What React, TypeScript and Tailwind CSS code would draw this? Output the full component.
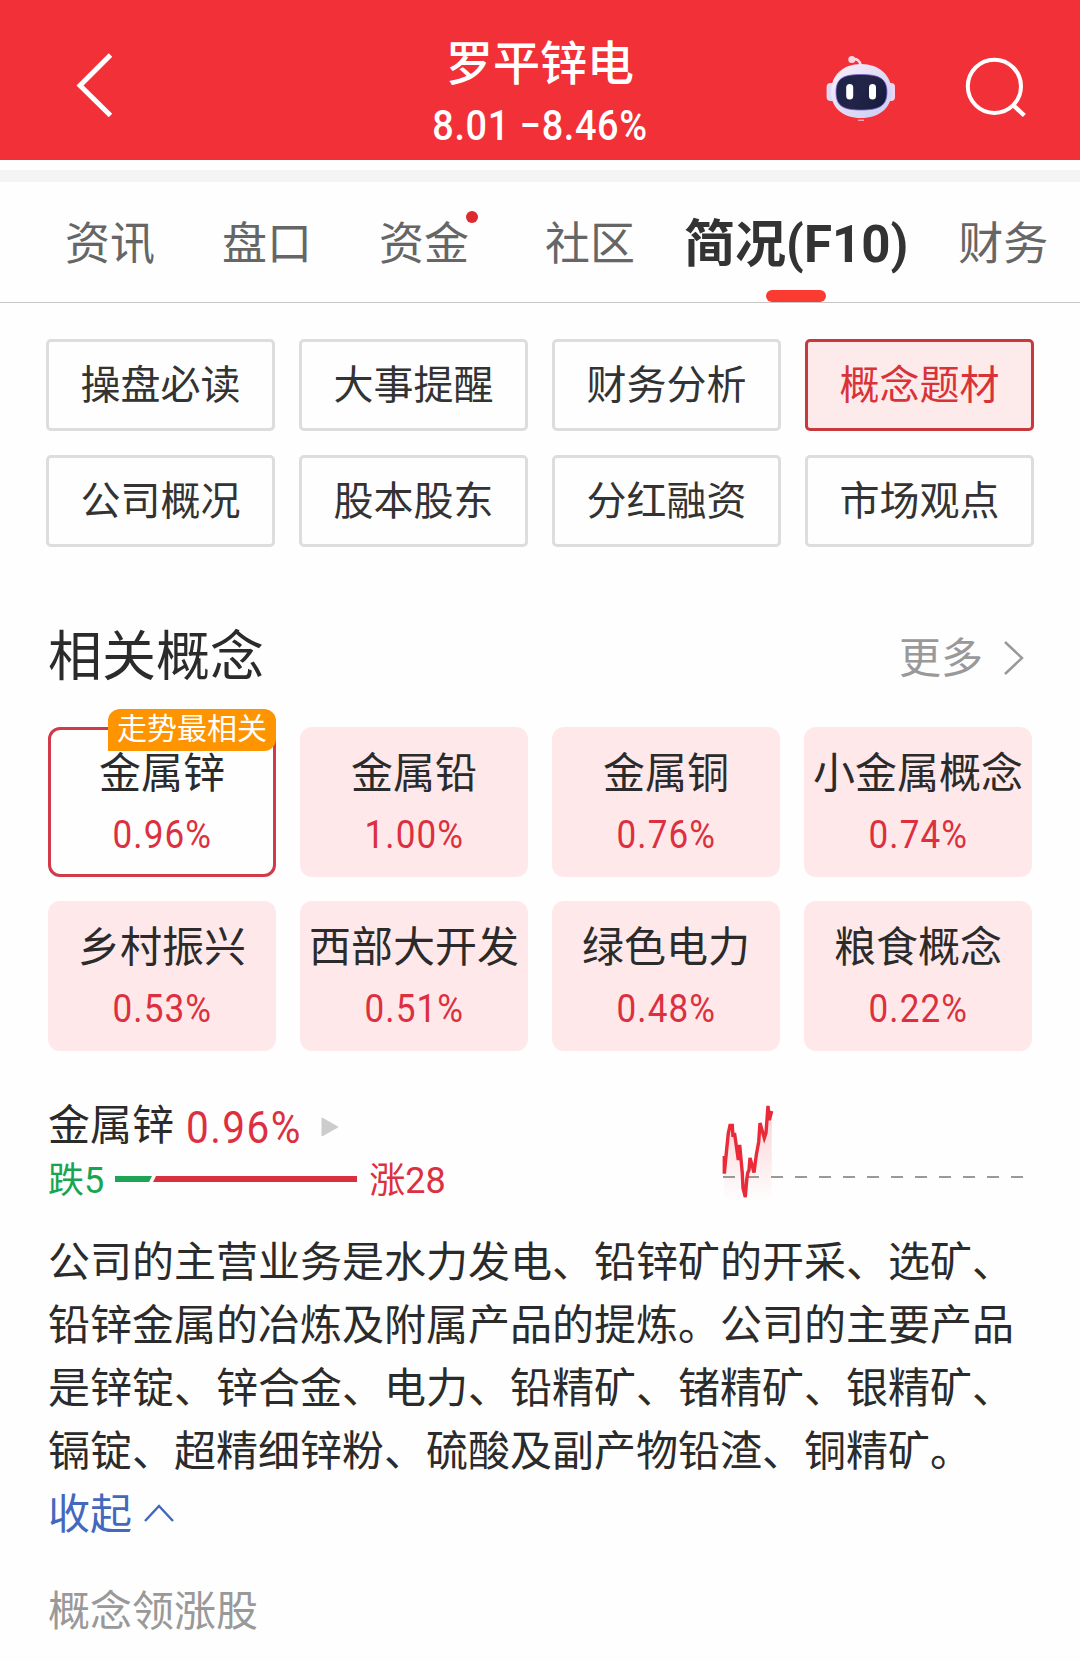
import clsx from 'clsx';

const tabs = [
    { label: '资讯', spacing: 'ml-[65px]' },
    { label: '盘口', spacing: 'ml-[67px]' },
    { label: '资金', spacing: 'ml-[67px]', dot: true },
    { label: '社区', spacing: 'ml-[76px]' },
    { label: '简况(F10)', spacing: 'ml-[49px]', active: true },
    { label: '财务', spacing: 'ml-[50px]' },
];

const sections = ['操盘必读', '大事提醒', '财务分析', '概念题材', '公司概况', '股本股东', '分红融资', '市场观点'];

const concepts = [
    { name: '金属锌', change: '0.96%', tag: '走势最相关' },
    { name: '金属铅', change: '1.00%' },
    { name: '金属铜', change: '0.76%' },
    { name: '小金属概念', change: '0.74%' },
    { name: '乡村振兴', change: '0.53%' },
    { name: '西部大开发', change: '0.51%' },
    { name: '绿色电力', change: '0.48%' },
    { name: '粮食概念', change: '0.22%' },
];

const trend =
    '4.3,59 4.3,76.7 6.5,54 8.3,36.3 10,28.5 12.3,28.5 13,40 14.5,36 18.3,63 19.7,48 22.3,76 23,91 25.3,100 26.7,83 27.7,76 29,73 30,61 32,68 34,75.5 36.3,58 38.7,44.7 40,26 44.3,41 46,36 48,9 49.3,23 51.7,14';

function Robot() {
    return (
        <svg width="74" height="72" viewBox="0 0 74 72" fill="none">
            <defs>
                <linearGradient id="shell" x1="10" y1="12" x2="60" y2="66" gradientUnits="userSpaceOnUse">
                    <stop stopColor="#fdeef8" />
                    <stop offset="0.5" stopColor="#e2def6" />
                    <stop offset="1" stopColor="#ccd0f5" />
                </linearGradient>
                <linearGradient id="visor" x1="12" y1="22" x2="62" y2="58" gradientUnits="userSpaceOnUse">
                    <stop stopColor="#1c2348" />
                    <stop offset="0.5" stopColor="#232447" />
                    <stop offset="1" stopColor="#131a3c" />
                </linearGradient>
            </defs>
            <path d="M28 7.5C33 6 36 9 37 14" stroke="#fbd5e3" strokeWidth="2.6" />
            <circle cx="27.8" cy="7.4" r="3.5" fill="#fbd5e3" />
            <rect x="2.6" y="31" width="10" height="18" rx="4" fill="#dcd8f5" />
            <rect x="61" y="31" width="10" height="18" rx="4" fill="#f0d3ee" />
            <path d="M37 12C55 12 67.6 23 67.6 40C67.6 56 55 66 37 66C19 66 7 56 7 40C7 23 19 12 37 12Z" fill="url(#shell)" />
            <path d="M37 22.5C54 22.5 63 26 63 40C63 54 55 58 37 58C19 58 12 54 12 40C12 26 20 22.5 37 22.5Z" fill="url(#visor)" stroke="#7a5fd0" strokeWidth="0.8" />
            <rect x="22.2" y="32" width="7" height="15.5" rx="3.5" fill="#fff" />
            <rect x="45" y="32" width="7" height="15.5" rx="3.5" fill="#fff" />
            <path d="M34 68.2H40" stroke="#fbd5e3" strokeWidth="1" />
        </svg>
    );
}

function Header() {
    return (
        <header className="grid h-40 grid-cols-3 items-center bg-[#f23038] pt-4 text-white">
            <svg className="ml-[72px]" width="44" height="72" viewBox="0 0 44 72" fill="none" stroke="currentColor" strokeWidth="5">
                <path d="M38.5 3L8 33.5L38.5 63.5" />
            </svg>
            <div className="mt-[18px] self-start whitespace-nowrap text-center">
                <h1 className="text-[47px] font-medium leading-[60px]">罗平锌电</h1>
                <p className="mt-0.5 scale-x-90 text-[42px] font-medium leading-[60px] tracking-[0.7px]">8.01 −8.46%</p>
            </div>
            <div className="flex items-center justify-end gap-16 pr-[50px]">
                <Robot />
                <svg width="68" height="68" viewBox="0 0 68 68" fill="none" stroke="currentColor" strokeWidth="4">
                    <circle cx="32.4" cy="32.3" r="26.6" />
                    <path d="M51 51L62.3 61.5" strokeWidth="4.4" />
                </svg>
            </div>
        </header>
    );
}

export default function App() {
    return (
        <div className="h-[1662px] w-[1080px] overflow-hidden bg-[#fefefe] font-[Roboto,'Noto_Sans_CJK_SC',sans-serif] text-[#2b2b2b]">
            <Header />
            <div className="mt-2.5 h-3 bg-[#f4f4f4]" />

            {/* Tabs */}
            <nav className="flex h-[121px] items-center whitespace-nowrap border-b border-[#c8c8c8] pt-1.5">
                {tabs.map((tab) => (
                    <div
                        key={tab.label}
                        className={clsx('relative leading-[60px]', tab.spacing, tab.active ? 'text-[51px] font-bold text-[#333]' : 'text-[45px] text-[#666]')}
                    >
                        {tab.label}
                        {tab.dot && <span className="absolute -right-[9px] -top-1 size-3 rounded-full bg-[#dc2a2f]" />}
                        {tab.active && <span className="absolute -bottom-[27px] left-1/2 h-3 w-[60px] -translate-x-1/2 rounded-full bg-[#fb3a31]" />}
                    </div>
                ))}
            </nav>

            {/* F10 sections */}
            <div className="mt-9 grid grid-cols-4 gap-6 px-[46px]">
                {sections.map((label) => (
                    <button
                        key={label}
                        className={clsx(
                            'h-[92px] rounded-[5px] border-[3px] pt-px text-[40px]',
                            label === '概念题材' ? 'border-[#c8393f] bg-[#fdeaea] text-[#d9333a]' : 'border-[#ddd] text-[#333]'
                        )}
                    >
                        {label}
                    </button>
                ))}
            </div>

            {/* Related concepts */}
            <div className="mt-[79px] flex h-16 items-center justify-between pl-12 pr-[55px]">
                <h2 className="text-[54px] leading-[64px]">相关概念</h2>
                <div className="flex items-center gap-[18px] text-[42px] text-[#999]">
                    更多
                    <svg width="24" height="36" viewBox="0 0 24 36" fill="none" stroke="currentColor" strokeWidth="2.5">
                        <path d="M4 2L21 18L4 34" />
                    </svg>
                </div>
            </div>

            <div className="mt-[37px] grid grid-cols-4 gap-6 px-12">
                {concepts.map((item) => (
                    <div
                        key={item.name}
                        className={clsx(
                            'relative flex h-[150px] flex-col items-center whitespace-nowrap rounded-xl border-[3px]',
                            item.tag ? 'border-[#d03a4a]' : 'border-transparent bg-[#fee8ea] bg-clip-border'
                        )}
                    >
                        <span className="mt-4 text-[42px] leading-[56px]">{item.name}</span>
                        <span className="mt-[5px] scale-x-90 text-[39px] leading-[56px] tracking-[1.2px] text-[#dc3040]">{item.change}</span>
                        {item.tag && (
                            <span className="absolute -right-[3px] -top-[21px] h-[42px] rounded-xl rounded-bl-none bg-[#fe9400] px-[9px] text-[30px] leading-10 text-white">
                                {item.tag}
                            </span>
                        )}
                    </div>
                ))}
            </div>

            {/* Selected concept */}
            <div className="mt-[46px] flex h-[110px] justify-between pl-12 pr-[54px]">
                <div>
                    <div className="flex h-[58px] items-center">
                        <span className="text-[42px] leading-[56px]">金属锌</span>
                        <span className="-mr-3 ml-3 mt-1 origin-left scale-x-90 text-[45px] leading-[56px] tracking-[1.6px] text-[#dc3040]">0.96%</span>
                        <svg className="ml-[18px] mt-0.5" width="18" height="20" viewBox="0 0 18 20">
                            <path d="M1 1L17 10L1 19Z" fill="#ccc" stroke="#ccc" strokeLinejoin="round" />
                        </svg>
                    </div>
                    <div className="flex h-[52px] items-center text-[36px]">
                        <span className="text-[#17a551]">跌5</span>
                        <svg className="-mt-1 ml-[11px] mr-3" width="242" height="6" viewBox="0 0 242 6">
                            <path d="M0 0H37L34 6H0Z" fill="#1fa455" />
                            <path d="M41 0H242V6H38Z" fill="#d8303f" />
                        </svg>
                        <span className="text-[#dc3040]">涨28</span>
                    </div>
                </div>
                <svg width="306" height="110" viewBox="0 0 306 110" fill="none">
                    <defs>
                        <linearGradient id="area" x1="0" y1="0" x2="0" y2="1">
                            <stop stopColor="#f22a3c" stopOpacity="0.22" />
                            <stop offset="1" stopColor="#f22a3c" stopOpacity="0" />
                        </linearGradient>
                    </defs>
                    <polygon points={`4.3,104 ${trend} 51.7,104`} fill="url(#area)" />
                    <path d="M3 80H306" stroke="#999" strokeWidth="2" strokeDasharray="12 12" />
                    <polyline points={trend} stroke="#ea2939" strokeWidth="3.4" />
                </svg>
            </div>

            <div className="mt-6 px-12 text-[42px] leading-[63px]">
                <p>公司的主营业务是水力发电、铅锌矿的开采、选矿、铅锌金属的冶炼及附属产品的提炼。公司的主要产品是锌锭、锌合金、电力、铅精矿、锗精矿、银精矿、镉锭、超精细锌粉、硫酸及副产物铅渣、铜精矿。</p>
                <div className="flex items-center gap-[11px] text-[#4468bd]">
                    收起
                    <svg className="-mt-1" width="32" height="20" viewBox="0 0 32 20" fill="none" stroke="currentColor" strokeWidth="2.5">
                        <path d="M2 18L16 3L30 18" />
                    </svg>
                </div>
                <h3 className="mt-[34px] text-[#999]">概念领涨股</h3>
            </div>
        </div>
    );
}
